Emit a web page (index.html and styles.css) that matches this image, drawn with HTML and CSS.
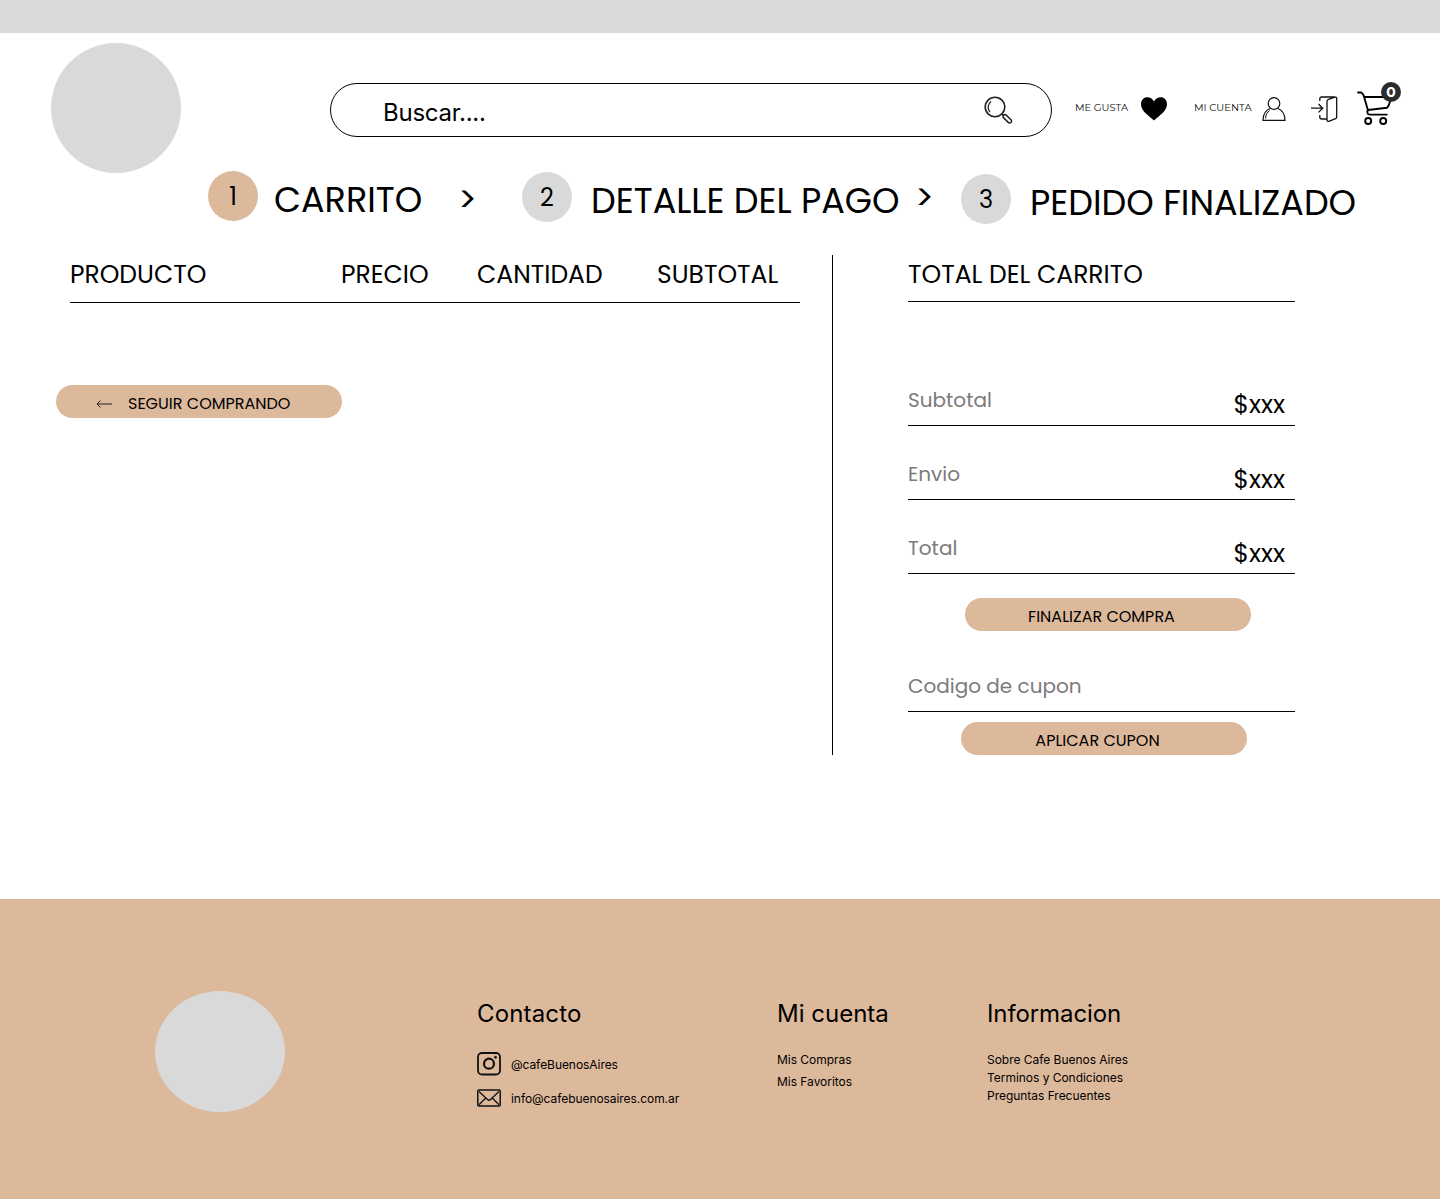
FILE: index.html
```html
<!DOCTYPE html>
<html lang="es">
<head>
<meta charset="utf-8">
<title>Carrito</title>
<link rel="stylesheet" href="styles.css">
</head>
<body>
<div class="topbar"></div>
<header class="header">
  <div class="logo"></div>
  <div class="search">
    <span class="search-text">Buscar....</span>
    <svg class="search-icon" width="30" height="30" viewBox="0 0 30 30" fill="none" stroke="#222" stroke-width="1.6"><circle cx="12" cy="12" r="9.800"/><path d="M6.800 17a7.400 7.400 0 0 1 1.300-10.600" stroke-width="1.300"/><path d="M19 19l2 2"/><path d="M20.200 22.400l5 5a1.900 1.900 0 0 0 2.800-2.700l-5.100-4.800a1.900 1.900 0 0 0-2.700 2.500z" stroke-width="1.500"/></svg>
  </div>
  <nav class="account">
    <a class="likes"><span>ME GUSTA</span>
      <svg width="28" height="26" viewBox="0 0 28 26"><path d="M14 24.500C9 20 1 15 1 8.300 1 4 3.800 1.300 7.300 1.300c2.900 0 5.300 1.500 6.700 4.200 1.400-2.700 3.800-4.200 6.700-4.200C24.200 1.300 27 4 27 8.300 27 15 19 20 14 24.500z"/></svg></a>
    <a class="user"><span>MI CUENTA</span>
      <svg width="26" height="28" viewBox="0 0 26 28" fill="none" stroke="#111" stroke-width="1.200"><circle cx="13" cy="8.500" r="5.800"/><path d="M9.500 13.300C5 15 2 19 2 25.400h22c0-6.400-3-10.400-7.500-12.100"/><path d="M4.500 23.500c.2-3.600 1.600-6.300 4-7.900" stroke-width="1"/></svg></a>
    <svg class="exit" width="28" height="28" viewBox="0 0 28 28" fill="none" stroke="#111" stroke-width="1.300"><path d="M1 13.200h11.500M8.500 9l4.200 4.200-4.200 4.200M9.800 6V4c0-1.400.6-2 2-2h13M9.800 20v2c0 1.400.6 2 2 2h5M18.500 4.300 25 2.200c1-.2 1.700.2 1.700 1.200V22c0 .9-.3 1.400-1.100 1.700l-6.800 2.600c-1 .4-1.800 0-1.800-1.200V6.300c0-1 .5-1.700 1.500-2z"/></svg>
    <div class="cart">
      <svg width="38" height="36" viewBox="0 0 38 36" fill="none" stroke="#000" stroke-width="1.900" stroke-linecap="round" stroke-linejoin="round"><path d="M2 2.500h3.500L7.500 5l4.500 15.500M8 7h26c.8 3-.5 8-3 10.800L12 20c-1.500 1.800-.5 4.600 1.800 4.600h17"/><circle cx="12.200" cy="31" r="3"/><circle cx="27.200" cy="31" r="3"/></svg>
      <span class="badge">0</span>
    </div>
  </nav>
</header>

<ol class="steps">
  <li class="num num-1">1</li><li class="step step-1">CARRITO</li>
  <li class="sep sep-1">&gt;</li>
  <li class="num num-2">2</li><li class="step step-2">DETALLE DEL PAGO</li>
  <li class="sep sep-2">&gt;</li>
  <li class="num num-3">3</li><li class="step step-3">PEDIDO FINALIZADO</li>
</ol>

<main class="main">
  <section class="products">
    <div class="cols"><span class="c1">PRODUCTO</span><span class="c2">PRECIO</span><span class="c3">CANTIDAD</span><span class="c4">SUBTOTAL</span></div>
    <a class="btn btn-back"><svg width="16" height="10" viewBox="0 0 16 10" fill="none" stroke="#222" stroke-width="1"><path d="M16 5H1M4.500 1.500 1 5l3.500 3.500"/></svg><span>SEGUIR COMPRANDO</span></a>
  </section>
  <section class="totals">
    <h2 class="totals-title">TOTAL DEL CARRITO</h2>
    <div class="row row-1"><span class="label">Subtotal</span><span class="amount">$xxx</span></div>
    <div class="row row-2"><span class="label">Envio</span><span class="amount">$xxx</span></div>
    <div class="row row-3"><span class="label">Total</span><span class="amount">$xxx</span></div>
    <a class="btn btn-finish">FINALIZAR COMPRA</a>
    <div class="row row-coupon"><span class="label">Codigo de cupon</span></div>
    <a class="btn btn-coupon">APLICAR CUPON</a>
  </section>
</main>

<footer class="footer">
  <div class="footer-logo"></div>
  <section class="contact">
    <h3>Contacto</h3>
    <div class="contact-item"><svg width="24" height="24" viewBox="0 0 24 24" fill="none" stroke="#111" stroke-width="1.800"><rect x="1" y="1" width="22" height="21.500" rx="4"/><circle cx="12" cy="11.700" r="5" stroke-width="2.200"/><circle cx="18.500" cy="5.300" r="1" fill="#111" stroke-width="1"/></svg><span>@cafeBuenosAires</span></div>
    <div class="contact-item contact-mail"><svg width="24" height="18" viewBox="0 0 24 18" fill="none" stroke="#111" stroke-width="1.500"><rect x=".8" y="1" width="22.400" height="16" rx="1"/><path d="M2 2.500l8.500 8q1.500 1.400 3 0l8.500-8M2 15.800l6.500-6.500M22 15.800l-6.500-6.500" stroke-width="1.300"/></svg><span>info@cafebuenosaires.com.ar</span></div>
  </section>
  <section class="links links-account">
    <h3>Mi cuenta</h3>
    <a>Mis Compras</a><a>Mis Favoritos</a>
  </section>
  <section class="links links-info">
    <h3>Informacion</h3>
    <a>Sobre Cafe Buenos Aires</a><a>Terminos y Condiciones</a><a>Preguntas Frecuentes</a>
  </section>
</footer>
</body>
</html>
```
FILE: styles.css
```css
* { box-sizing: border-box; }
body { margin: 0; background: #fff; color: #000; font-family: Poppins, Lato, sans-serif; width: 1440px; }
span, li, a { white-space: nowrap; }
.topbar { height: 33px; background: #d9d9d9; }
.header { display: flex; height: 138px; padding: 10px 0 0 51px; }
.logo { width: 130px; height: 130px; border-radius: 50%; background: #d9d9d9; flex: none; }
.search { display: flex; justify-content: space-between; width: 722px; height: 54px; margin: 40px 0 0 149px; padding: 0 38px 0 52px; border: 1px solid #000; border-radius: 27px; flex: none; }
.search-text { font: 24px/58px Inter, sans-serif; letter-spacing: -.25px; }
.search-icon { margin-top: 11px; }
.account { display: flex; margin: 38px 0 0 23px; }
.account a { display: flex; font: 10px/12px Montserrat, Lato, sans-serif; color: #111; }
.likes { width: 119px; }
.likes span { width: 65px; margin-top: 21px; }
.likes svg { margin-top: 15px; }
.user { width: 115px; }
.user span { width: 67px; margin-top: 21px; }
.user svg { margin-top: 14px; }
.exit { margin: 14px 0 0 1px; }
.cart { position: relative; margin: 9px 0 0 18px; }
.badge { position: absolute; left: 25px; top: -8px; width: 20px; height: 20px; border-radius: 50%; background: #2c2c2f; color: #fff; font: 700 14px/20px Montserrat, Inter, sans-serif; text-align: center; }

.steps { display: flex; list-style: none; margin: 0; padding: 0 0 0 208px; height: 84px; font-size: 35px; line-height: 51px; }
.num { width: 50px; height: 50px; border-radius: 50%; background: #d9d9d9; font-size: 24px; line-height: 51px; text-align: center; flex: none; }
.num-1 { background: #ddb99b; }
.num-2 { margin-top: 1px; }
.num-3 { margin-top: 3px; }
.step-1 { width: 187px; padding: 3px 0 0 16px; }
.step-2 { width: 344px; padding: 4px 0 0 19px; }
.step-3 { padding: 6px 0 0 19px; }
.sep-1 { width: 77px; padding: 3px 0 0 13px; }
.sep-2 { width: 45px; padding-top: 1px; text-indent: -1px; }

.main { display: flex; height: 644px; padding-left: 56px; }
.products { width: 777px; height: 500px; border-right: 1px solid #000; }
.cols { display: flex; width: 730px; height: 48px; margin-left: 14px; border-bottom: 1px solid #000; font-size: 25px; line-height: 40px; }
.c1 { width: 271px; }
.c2 { width: 136px; }
.c3 { width: 180px; }
.btn { display: flex; justify-content: center; width: 286px; height: 33px; border-radius: 17px; background: #ddb99b; font-size: 16px; line-height: 38px; }
.btn-back { margin-top: 82px; justify-content: flex-start; padding-left: 40px; }
.btn-back svg { margin: 14px 16px 0 0; }
.totals { width: 387px; margin-left: 75px; }
.totals-title { height: 47px; margin: 0 0 77px; border-bottom: 1px solid #000; font-size: 25px; font-weight: 400; line-height: 40px; }
.row { display: flex; justify-content: space-between; height: 47px; margin-bottom: 27px; padding-right: 10px; border-bottom: 1px solid #000; }
.label { color: #7c7a7a; font-size: 20px; line-height: 42px; }
.amount { font-size: 25px; line-height: 51px; }
.row-2 .amount, .row-3 .amount { line-height: 53px; }
.row-3 { margin-bottom: 24px; }
.btn-finish { margin: 0 0 34px 57px; padding-right: 13px; }
.row-coupon { margin-bottom: 10px; }
.btn-coupon { margin-left: 53px; padding-right: 13px; }

.footer { display: flex; height: 300px; padding: 92px 0 0 155px; background: #ddb99b; font: 12px/18px Inter, sans-serif; }
.footer-logo { width: 130px; height: 121px; border-radius: 50%; background: #d9d9d9; }
.footer h3 { margin: 0; font-size: 24px; font-weight: 400; line-height: 46px; }
.contact { width: 300px; margin-left: 192px; }
.contact h3 { letter-spacing: .15px; }
.contact-item { display: flex; align-items: center; gap: 10px; height: 24px; margin-top: 15px; letter-spacing: -.06px; }
.contact-item span { padding-top: 2px; }
.contact-mail { margin-top: 10px; }
.links a { display: block; letter-spacing: -.03px; }
.links h3 { margin-bottom: 14px; }
.links-info h3 { letter-spacing: -.1px; }
.links-account { width: 210px; }
.links-account a { margin-bottom: 4px; }
```
